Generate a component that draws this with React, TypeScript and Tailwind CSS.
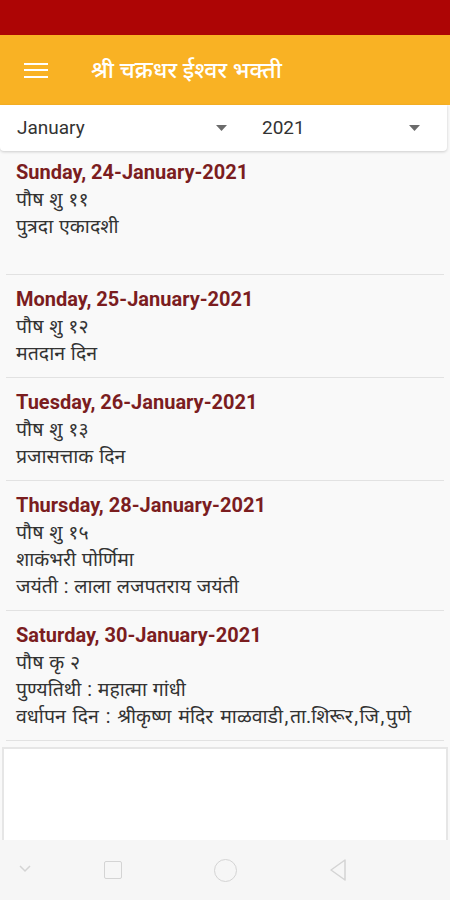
import React from "react";

const items: { date: string; lines: string[]; first?: boolean }[] = [
  { date: "Sunday, 24-January-2021", lines: ["पौष शु ११", "पुत्रदा एकादशी"], first: true },
  { date: "Monday, 25-January-2021", lines: ["पौष शु १२", "मतदान दिन"] },
  { date: "Tuesday, 26-January-2021", lines: ["पौष शु १३", "प्रजासत्ताक दिन"] },
  {
    date: "Thursday, 28-January-2021",
    lines: ["पौष शु १५", "शाकंभरी पोर्णिमा", "जयंती : लाला लजपतराय जयंती"],
  },
  {
    date: "Saturday, 30-January-2021",
    lines: [
      "पौष कृ २",
      "पुण्यतिथी : महात्मा गांधी",
      "वर्धापन दिन : श्रीकृष्ण मंदिर माळवाडी,ता.शिरूर,जि,पुणे",
    ],
  },
];

function Arrow() {
  return (
    <svg width="11" height="6" viewBox="0 0 11 6">
      <path d="M0 0 L11 0 L5.5 6 Z" fill="#6b6b6b" />
    </svg>
  );
}

function Line({ text }: { text: string }) {
  if (text.includes(",")) {
    const parts = text.split(",");
    return (
      <div className="text-[19.5px] leading-[27px] text-[#333] whitespace-nowrap [word-spacing:2px]">
        {parts.map((p, i) => (
          <React.Fragment key={i}>
            {i > 0 && <span className="mx-[1.5px]">,</span>}
            {p}
          </React.Fragment>
        ))}
      </div>
    );
  }
  return (
    <div className="text-[19.5px] leading-[27px] text-[#333] whitespace-nowrap [word-spacing:1px]">
      {text}
    </div>
  );
}

export default function App() {
  return (
    <div
      className="w-[450px] h-[900px] bg-[#f9f9f9] flex flex-col overflow-hidden"
      style={{ fontFamily: "Roboto, 'Noto Sans', sans-serif" }}
    >
      <div className="h-[35px] bg-[#ad0505] shrink-0" />
      <div className="h-[70px] bg-[#f9b224] shrink-0 flex items-center">
        <div className="ml-[24px] w-[24px] flex flex-col gap-[4.5px]">
          <div className="h-[2px] bg-white" />
          <div className="h-[2px] bg-white" />
          <div className="h-[2px] bg-white" />
        </div>
        <div className="ml-[43px] text-white text-[23px] font-medium leading-none">
          श्री चक्रधर ईश्वर भक्ती
        </div>
      </div>
      <div className="h-[46px] shrink-0 bg-white rounded-b-[4px] shadow-[0_1px_3px_rgba(0,0,0,0.18)] flex items-center mr-[3px] relative z-10">
        <div className="w-[237px] flex items-center justify-between pl-[17px] pr-[10px]">
          <span className="text-[19px] text-[#333]">January</span>
          <Arrow />
        </div>
        <div className="flex-1 flex items-center justify-between pl-[25px] pr-[27px]">
          <span className="text-[19px] text-[#333]">2021</span>
          <Arrow />
        </div>
      </div>
      <div className="flex flex-col">
        {items.map((it) => (
          <div key={it.date} className="flex flex-col">
            <div
              className={
                it.first
                  ? "px-[16px] pt-[8px] pb-[34px] flex flex-col"
                  : "px-[16px] pt-[11px] pb-[10px] flex flex-col"
              }
            >
              <div className="text-[20px] font-bold leading-[27px] text-[#7b1d1f]">{it.date}</div>
              {it.lines.map((l) => (
                <Line key={l} text={l} />
              ))}
            </div>
            <div className="mx-[6px] h-px bg-[#e2e2e2]" />
          </div>
        ))}
      </div>
      <div className="mt-[6px] mx-[2px] flex-1 bg-white border-x-[2px] border-t-[2px] border-[#e6e6e6]" />
      <div className="h-[60px] shrink-0 bg-[#f6f6f6] flex items-center relative">
        <svg className="absolute left-[18px] top-[24px]" width="14" height="10" viewBox="0 0 14 10">
          <path d="M2 2 L7 7 L12 2" stroke="#d4d4d4" strokeWidth="1.5" fill="none" />
        </svg>
        <div className="absolute left-[104px] top-[21px] w-[18px] h-[18px] border-[1.5px] border-[#d4d4d4] rounded-[2px]" />
        <div className="absolute left-[214px] top-[19px] w-[23px] h-[23px] border-[1.5px] border-[#d4d4d4] rounded-full" />
        <svg className="absolute left-[328px] top-[18px]" width="20" height="24" viewBox="0 0 20 24">
          <path d="M17 2 L3 12 L17 22 Z" stroke="#d4d4d4" strokeWidth="1.5" fill="none" strokeLinejoin="round" />
        </svg>
      </div>
    </div>
  );
}
